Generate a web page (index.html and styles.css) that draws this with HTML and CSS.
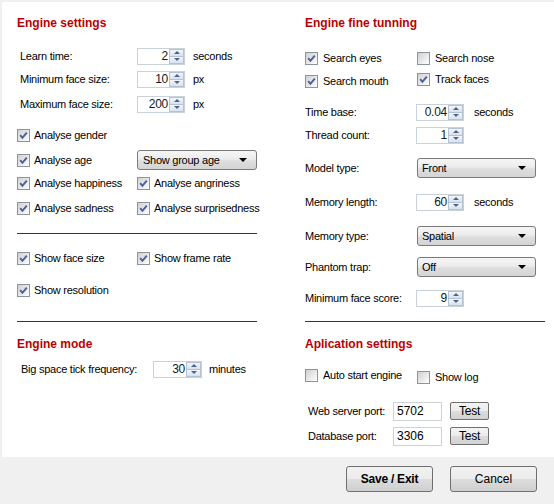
FILE: index.html
```html
<!DOCTYPE html>
<html>
<head>
<meta charset="utf-8">
<link rel="stylesheet" href="styles.css">
</head>
<body>
<div class="panel">
  <div class="col">
    <div class="heading">Engine settings</div>

    <div class="row g13"><span class="lbl">Learn time:</span><span class="spin"><span class="val">2</span><span class="btns"><span class="sb"><i class="up"></i></span><span class="sb"><i class="dn"></i></span></span></span><span class="unit">seconds</span></div>
    <div class="row g3"><span class="lbl">Minimum face size:</span><span class="spin"><span class="val">10</span><span class="btns"><span class="sb"><i class="up"></i></span><span class="sb"><i class="dn"></i></span></span></span><span class="unit">px</span></div>
    <div class="row g5"><span class="lbl">Maximum face size:</span><span class="spin"><span class="val">200</span><span class="btns"><span class="sb"><i class="up"></i></span><span class="sb"><i class="dn"></i></span></span></span><span class="unit">px</span></div>

    <div class="row g11"><span class="chk"><span class="cb"><svg viewBox="0 0 11 11"><path d="M2.2 5.2 L4.4 7.8 L8.8 2.6"/></svg></span>Analyse gender</span></div>
    <div class="row g5"><span class="chk"><span class="cb"><svg viewBox="0 0 11 11"><path d="M2.2 5.2 L4.4 7.8 L8.8 2.6"/></svg></span>Analyse age</span><span class="select"><span class="stext">Show group age</span><i class="arrow"></i></span></div>
    <div class="row g3"><span class="chk"><span class="cb"><svg viewBox="0 0 11 11"><path d="M2.2 5.2 L4.4 7.8 L8.8 2.6"/></svg></span>Analyse happiness</span><span class="chk"><span class="cb"><svg viewBox="0 0 11 11"><path d="M2.2 5.2 L4.4 7.8 L8.8 2.6"/></svg></span>Analyse angriness</span></div>
    <div class="row g5"><span class="chk"><span class="cb"><svg viewBox="0 0 11 11"><path d="M2.2 5.2 L4.4 7.8 L8.8 2.6"/></svg></span>Analyse sadness</span><span class="chk"><span class="cb"><svg viewBox="0 0 11 11"><path d="M2.2 5.2 L4.4 7.8 L8.8 2.6"/></svg></span>Analyse surprisedness</span></div>

    <div class="divider d15"></div>

    <div class="row g14"><span class="chk"><span class="cb"><svg viewBox="0 0 11 11"><path d="M2.2 5.2 L4.4 7.8 L8.8 2.6"/></svg></span>Show face size</span><span class="chk"><span class="cb"><svg viewBox="0 0 11 11"><path d="M2.2 5.2 L4.4 7.8 L8.8 2.6"/></svg></span>Show frame rate</span></div>
    <div class="row g12"><span class="chk"><span class="cb"><svg viewBox="0 0 11 11"><path d="M2.2 5.2 L4.4 7.8 L8.8 2.6"/></svg></span>Show resolution</span></div>

    <div class="divider d21"></div>

    <div class="heading g12">Engine mode</div>
    <div class="row g5"><span class="lbl lbl-tick">Big space tick frequency:</span><span class="spin spin-wide"><span class="val">30</span><span class="btns"><span class="sb"><i class="up"></i></span><span class="sb"><i class="dn"></i></span></span></span><span class="unit unit-min">minutes</span></div>
  </div>

  <div class="col right">
    <div class="heading">Engine fine tunning</div>

    <div class="row g15"><span class="chk"><span class="cb"><svg viewBox="0 0 11 11"><path d="M2.2 5.2 L4.4 7.8 L8.8 2.6"/></svg></span>Search eyes</span><span class="chk"><span class="cb off"></span>Search nose</span></div>
    <div class="row g3"><span class="chk"><span class="cb"><svg viewBox="0 0 11 11"><path d="M2.2 5.2 L4.4 7.8 L8.8 2.6"/></svg></span>Search mouth</span><span class="chk up2"><span class="cb"><svg viewBox="0 0 11 11"><path d="M2.2 5.2 L4.4 7.8 L8.8 2.6"/></svg></span>Track faces</span></div>

    <div class="row g11"><span class="lbl">Time base:</span><span class="spin"><span class="val">0.04</span><span class="btns"><span class="sb"><i class="up"></i></span><span class="sb"><i class="dn"></i></span></span></span><span class="unit">seconds</span></div>
    <div class="row g3"><span class="lbl">Thread count:</span><span class="spin"><span class="val">1</span><span class="btns"><span class="sb"><i class="up"></i></span><span class="sb"><i class="dn"></i></span></span></span></div>
    <div class="row g13"><span class="lbl">Model type:</span><span class="select"><span class="stext">Front</span><i class="arrow"></i></span></div>
    <div class="row g14"><span class="lbl">Memory length:</span><span class="spin"><span class="val">60</span><span class="btns"><span class="sb"><i class="up"></i></span><span class="sb"><i class="dn"></i></span></span></span><span class="unit">seconds</span></div>
    <div class="row g14"><span class="lbl">Memory type:</span><span class="select"><span class="stext">Spatial</span><i class="arrow"></i></span></div>
    <div class="row g11"><span class="lbl">Phantom trap:</span><span class="select"><span class="stext">Off</span><i class="arrow"></i></span></div>
    <div class="row g11"><span class="lbl">Minimum face score:</span><span class="spin"><span class="val">9</span><span class="btns"><span class="sb"><i class="up"></i></span><span class="sb"><i class="dn"></i></span></span></span></div>

    <div class="divider d13"></div>

    <div class="heading g12">Aplication settings</div>
    <div class="row g13"><span class="chk up2"><span class="cb off"></span>Auto start engine</span><span class="chk"><span class="cb off"></span>Show log</span></div>
    <div class="row g14"><span class="lbl lbl-port">Web server port:</span><span class="input">5702</span><span class="btn-test">Test</span></div>
    <div class="row g5"><span class="lbl lbl-port">Database port:</span><span class="input">3306</span><span class="btn-test">Test</span></div>
  </div>
</div>
<div class="footer">
  <span class="btn btn-primary">Save / Exit</span>
  <span class="btn">Cancel</span>
</div>
</body>
</html>
```

FILE: styles.css
```css
html, body {
  margin: 0;
  padding: 0;
}
body {
  background: #f0f0f0;
  font-family: "Liberation Sans", Arial, sans-serif;
  font-size: 11px;
  letter-spacing: -0.25px;
  color: #000;
  width: 554px;
  height: 504px;
  overflow: hidden;
}
.panel {
  margin: 2px 0 0 2px;
  height: 455px;
  background: #fff;
  display: grid;
  grid-template-columns: 240px 240px;
  column-gap: 48px;
  padding: 11px 0 0 15px;
  box-sizing: border-box;
}
.col {
  display: flex;
  flex-direction: column;
}
.heading {
  height: 20px;
  line-height: 20px;
  font-size: 12px;
  font-weight: bold;
  letter-spacing: 0;
  color: #bb0000;
}
.row {
  height: 20px;
  display: flex;
  align-items: center;
}
.g3 { margin-top: 3px; }
.g5 { margin-top: 5px; }
.g11 { margin-top: 11px; }
.g12 { margin-top: 12px; }
.g13 { margin-top: 13px; }
.g14 { margin-top: 14px; }
.g15 { margin-top: 15px; }

.divider {
  height: 1px;
  background: #b00000;
}
.d13 { margin-top: 13px; }
.d15 { margin-top: 15px; }
.d21 { margin-top: 21px; }

.lbl {
  width: 117px;
  padding-left: 3px;
  flex: none;
}
.right .lbl {
  width: 111px;
  padding-left: 0;
}
.lbl-tick {
  width: 132px;
  padding-left: 4px;
}
.right .lbl-port {
  width: 85px;
  padding-left: 3px;
}

/* spin box */
.spin {
  width: 48px;
  height: 17px;
  box-sizing: border-box;
  border: 1px solid #c9d1da;
  display: flex;
  background: #fff;
  flex: none;
}
.spin-wide { width: 49px; }
.val {
  flex: 1;
  text-align: right;
  line-height: 15px;
  padding-right: 1px;
  font-size: 12px;
  color: #101828;
}
.btns {
  width: 15px;
  display: flex;
  flex-direction: column;
}
.sb {
  flex: 1;
  border: 1px solid #b4c2d3;
  background: linear-gradient(#f3f6fa, #d9e2ec);
  display: flex;
  align-items: center;
  justify-content: center;
}
.sb + .sb { border-top: none; }
.up, .dn {
  width: 0;
  height: 0;
  border-left: 3px solid transparent;
  border-right: 3px solid transparent;
}
.up { border-bottom: 3px solid #4d6290; }
.dn { border-top: 3px solid #4d6290; }
.unit { margin-left: 8px; }
.right .unit { margin-left: 10px; }
.unit-min { margin-left: 7px; }

/* checkbox */
.chk {
  width: 120px;
  display: flex;
  align-items: center;
  flex: none;
  white-space: nowrap;
}
.right .chk { width: 112px; }
.up2 { position: relative; top: -2px; }
.cb {
  width: 13px;
  height: 13px;
  box-sizing: border-box;
  border: 1px solid #8c949e;
  background: linear-gradient(135deg, #d0d0d0 0%, #eeeeee 65%, #fff 100%);
  margin-right: 4px;
  display: flex;
  flex: none;
}
.right .cb { margin-right: 5px; }
.cb svg {
  width: 11px;
  height: 11px;
}
.cb path {
  fill: none;
  stroke: #4a5e9c;
  stroke-width: 1.9;
}

/* dropdown */
.select {
  width: 120px;
  height: 20px;
  box-sizing: border-box;
  border: 1px solid #7a7a7a;
  border-radius: 3px;
  background: linear-gradient(#f6f6f6 0%, #ececec 45%, #dedede 55%, #d4d4d4 100%);
  display: flex;
  align-items: center;
  justify-content: space-between;
  padding: 0 9px 0 5px;
  font-size: 11px;
  flex: none;
}
.right .select {
  width: 119px;
  margin-left: 1px;
  padding-left: 4px;
}
.arrow {
  width: 0;
  height: 0;
  border-left: 4px solid transparent;
  border-right: 4px solid transparent;
  border-top: 4px solid #000;
}

/* ports */
.input {
  width: 49px;
  height: 19px;
  box-sizing: border-box;
  border: 1px solid #cdd3da;
  line-height: 17px;
  padding-left: 3px;
  font-size: 12px;
  letter-spacing: 0;
  flex: none;
}
.btn-test {
  margin-left: 8px;
  width: 39px;
  height: 18px;
  box-sizing: border-box;
  border: 1px solid #6f6f6f;
  border-radius: 2px;
  background: linear-gradient(#f4f4f4 0%, #ebebeb 50%, #dcdcdc 51%, #d2d2d2 100%);
  text-align: center;
  line-height: 16px;
  font-size: 12px;
}

/* footer */
.footer {
  height: 47px;
  display: flex;
  justify-content: flex-end;
  align-items: flex-start;
  padding: 9px 17px 0 0;
  box-sizing: border-box;
  gap: 17px;
}
.btn {
  width: 87px;
  height: 26px;
  box-sizing: border-box;
  border: 1px solid #707070;
  border-radius: 3px;
  background: linear-gradient(#f2f2f2 0%, #ebebeb 50%, #dddddd 51%, #cfcfcf 100%);
  text-align: center;
  line-height: 24px;
  font-size: 12px;
  letter-spacing: 0;
}
.btn-primary {
  font-weight: bold;
  letter-spacing: -0.25px;
}
```
